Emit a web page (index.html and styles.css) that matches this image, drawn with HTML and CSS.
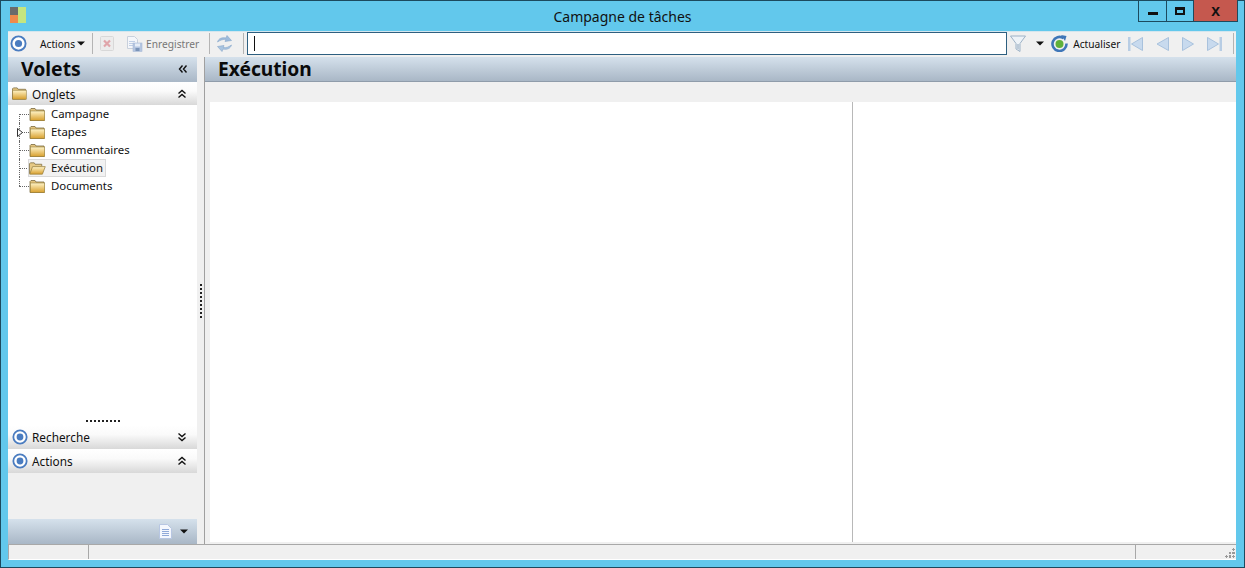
FILE: index.html
```html
<!DOCTYPE html>
<html lang="fr">
<head>
<meta charset="utf-8">
<title>Campagne de tâches</title>
<link rel="stylesheet" href="styles.css">
</head>
<body>
<svg class="defs" width="0" height="0" aria-hidden="true">
  <defs>
    <linearGradient id="fold" x1="0" y1="0" x2="0" y2="1"><stop offset="0" stop-color="#fff4c8"/><stop offset="1" stop-color="#d89f2c"/></linearGradient>
    <linearGradient id="foldTab" x1="0" y1="0" x2="0" y2="1"><stop offset="0" stop-color="#e6c985"/><stop offset="1" stop-color="#c79a45"/></linearGradient>
    <symbol id="ring" viewBox="0 0 18 18">
      <circle cx="9" cy="9" r="7.500" fill="#fff" stroke="#4a7cc0" stroke-width="2"/>
      <circle cx="9" cy="9" r="3.800" fill="#4a7cc0"/>
    </symbol>
    <symbol id="folder" viewBox="0 0 16 13">
      <path d="M.5 3.500V1.500l1-1h4l1 1.500h8v10.500h-14z" fill="url(#foldTab)" stroke="#7a6a40" stroke-width=".8"/>
      <rect x=".8" y="3" width="14.400" height="9.600" fill="url(#fold)" stroke="#97803f" stroke-width=".6"/>
    </symbol>
    <symbol id="folderOpen" viewBox="0 0 18 13">
      <path d="M.5 12V1.500l1-1h4l1 1.500h7v2" fill="#e6c985" stroke="#7a6a40" stroke-width=".8"/>
      <path d="M.8 12.500l3-8h13.400l-3 8z" fill="url(#fold)" stroke="#97803f" stroke-width=".8"/>
    </symbol>
    <symbol id="chevUp" viewBox="0 0 10 10">
      <path d="M1.500 4.500L5 1.500l3.500 3M1.500 8.500L5 5.500l3.500 3" fill="none" stroke="#111" stroke-width="1.400"/>
    </symbol>
    <symbol id="chevDown" viewBox="0 0 10 10">
      <path d="M1.500 1.500L5 4.500l3.500-3M1.500 5.500L5 8.500l3.500-3" fill="none" stroke="#111" stroke-width="1.400"/>
    </symbol>
    <symbol id="chevLeft" viewBox="0 0 10 10">
      <path d="M4.500 1.500L1.500 5l3 3.500M8.500 1.500L5.500 5l3 3.500" fill="none" stroke="#111" stroke-width="1.400"/>
    </symbol>
    <symbol id="caret" viewBox="0 0 8 5"><path d="M0 .5h8L4 4.500z" fill="#111"/></symbol>
  </defs>
</svg>

<div class="window">
  <header class="titlebar">
    <svg class="app-logo" width="17" height="17" viewBox="0 0 17 17" aria-hidden="true">
      <rect width="8" height="8" fill="#6b6b6b"/>
      <rect y="8" width="8" height="8" fill="#f08a4b"/>
      <rect x="8" width="8" height="16" fill="#c5e57e"/>
    </svg>
    <h1 class="title">Campagne de tâches</h1>
    <div class="win-controls">
      <div class="wc wc-min"><span class="glyph-min"></span></div>
      <div class="wc wc-max"><span class="glyph-max"></span></div>
      <div class="wc wc-close">X</div>
    </div>
  </header>

  <div class="client">
    <div class="toolbar">
      <svg class="tb-ring" width="17" height="17"><use href="#ring"/></svg>
      <span class="tb-text tb-actions">Actions</span>
      <svg class="tb-caret" width="8" height="5"><use href="#caret"/></svg>
      <span class="tb-sep"></span>
      <svg class="tb-del" width="14" height="15" viewBox="0 0 14 15" aria-hidden="true">
        <rect x=".5" y=".5" width="13" height="14" rx="1" fill="#ececec" stroke="#d8d8d8"/>
        <path d="M4 4.500l6 6M10 4.500l-6 6" stroke="#e0a5aa" stroke-width="2.200"/>
      </svg>
      <svg class="tb-save" width="17" height="17" viewBox="0 0 17 17" aria-hidden="true">
        <path d="M1.500 1.500h7l3 3v9h-10z" fill="#f4f6fa" stroke="#c8d0dc"/>
        <path d="M3 6.500h6M3 8.500h4M3 10.500h4" stroke="#c0cfe6"/>
        <rect x="7" y="8" width="9" height="8.500" fill="#b4c5e0" stroke="#a9bad6" stroke-width=".6"/>
        <rect x="9" y="8.500" width="5" height="3" fill="#e6edf7"/>
        <rect x="9.500" y="13" width="4" height="3" fill="#7a94b8"/>
      </svg>
      <span class="tb-text tb-disabled">Enregistrer</span>
      <span class="tb-sep tb-sep-b"></span>
      <svg class="tb-sync" width="17" height="17" viewBox="0 0 17 17" aria-hidden="true">
        <path d="M1.500 7C2.500 3.500 6 2 10 3l1-2.500 4.500 5-6.500 1 .8-2C7.500 4 4.500 5 1.500 7z" fill="#9dbbdc" stroke="#86a6ca" stroke-width=".6"/>
        <path d="M15.500 10c-1 3.500-4.500 5-8.500 4l-1 2.500-4.500-5 6.500-1-.8 2c3.300.5 5.300-.5 8.300-2.500z" fill="#a9c4e0" stroke="#86a6ca" stroke-width=".6"/>
      </svg>
      <span class="tb-sep tb-sep-c"></span>
      <div class="search"><span class="caret-line"></span></div>
      <svg class="tb-funnel" width="16" height="18" viewBox="0 0 16 18" aria-hidden="true">
        <path d="M.5 1h15L10 8.500v8l-4-2.500V8.500z" fill="#eef3f8" stroke="#9db2c6"/>
        <path d="M6.500 9h3v6l-3-1.500z" fill="#bccad8"/>
      </svg>
      <svg class="tb-caret tb-caret-f" width="8" height="5"><use href="#caret"/></svg>
      <svg class="tb-refresh" width="17" height="17" viewBox="0 0 17 17" aria-hidden="true">
        <path d="M12.500 3.200A7 7 0 1 0 15.500 8.500" fill="none" stroke="#3f76b8" stroke-width="2.600"/>
        <path d="M10 0l5.500 1-1.500 5z" fill="#3f76b8"/>
        <circle cx="8.500" cy="9" r="4" fill="#5fb03a"/>
      </svg>
      <span class="tb-text tb-refresh-label">Actualiser</span>
      <div class="nav">
        <svg width="15" height="14" viewBox="0 0 15 14" aria-hidden="true"><rect x="0" y="0" width="2.500" height="14" fill="#b8cde4"/><path d="M14.500 .5v13L3.500 7z" fill="#c8daee" stroke="#a9c2dd"/></svg>
        <svg width="13" height="14" viewBox="0 0 13 14" aria-hidden="true"><path d="M12.500 .5v13L1 7z" fill="#c8daee" stroke="#a9c2dd"/></svg>
        <svg width="12" height="14" viewBox="0 0 12 14" aria-hidden="true"><path d="M.5 .5v13L11.500 7z" fill="#c8daee" stroke="#a9c2dd"/></svg>
        <svg width="15" height="14" viewBox="0 0 15 14" aria-hidden="true"><rect x="12.500" y="0" width="2.500" height="14" fill="#b8cde4"/><path d="M.5 .5v13L11.500 7z" fill="#c8daee" stroke="#a9c2dd"/></svg>
      </div>
      <span class="tb-sep tb-sep-end"></span>
    </div>

    <div class="body">
      <aside class="sidebar">
        <div class="panel-head">
          <span class="panel-title">Volets</span>
          <svg width="10" height="10"><use href="#chevLeft"/></svg>
        </div>
        <div class="group-head group-first">
          <svg class="group-folder" width="15" height="13"><use href="#folder"/></svg>
          <span class="group-label">Onglets</span>
          <svg class="chev" width="10" height="10"><use href="#chevUp"/></svg>
        </div>
        <ul class="tree">
          <li class="node"><span class="node-item"><svg class="node-icon" width="16" height="13"><use href="#folder"/></svg><span class="node-label">Campagne</span></span></li>
          <li class="node">
            <svg class="expander" width="6" height="9" viewBox="0 0 6 9" aria-hidden="true"><path d="M.5 .5v8l5-4z" fill="#fff" stroke="#333"/></svg>
            <span class="node-item"><svg class="node-icon" width="16" height="13"><use href="#folder"/></svg><span class="node-label">Etapes</span></span>
          </li>
          <li class="node"><span class="node-item"><svg class="node-icon" width="16" height="13"><use href="#folder"/></svg><span class="node-label">Commentaires</span></span></li>
          <li class="node"><span class="node-item node-sel"><svg class="node-icon" width="17" height="13"><use href="#folderOpen"/></svg><span class="node-label">Exécution</span></span></li>
          <li class="node node-last"><span class="node-item"><svg class="node-icon" width="16" height="13"><use href="#folder"/></svg><span class="node-label">Documents</span></span></li>
        </ul>
        <div class="h-grip"></div>
        <div class="group-head">
          <svg class="group-ring" width="16" height="16"><use href="#ring"/></svg>
          <span class="group-label">Recherche</span>
          <svg class="chev" width="10" height="10"><use href="#chevDown"/></svg>
        </div>
        <div class="group-head">
          <svg class="group-ring" width="16" height="16"><use href="#ring"/></svg>
          <span class="group-label">Actions</span>
          <svg class="chev" width="10" height="10"><use href="#chevUp"/></svg>
        </div>
        <div class="side-spacer"></div>
        <div class="side-foot">
          <svg width="13" height="15" viewBox="0 0 13 15" aria-hidden="true">
            <path d="M.5 .5h8l4 4v10H.5z" fill="#f4f7fd" stroke="#b7c6e2"/>
            <path d="M3 5.500h7M3 7.500h7M3 9.500h7M3 11.500h7" stroke="#8fa9d8"/>
          </svg>
          <svg class="foot-caret" width="8" height="5"><use href="#caret"/></svg>
        </div>
      </aside>

      <div class="v-split"><span class="v-grip"></span></div>

      <main class="main">
        <div class="main-head">Exécution</div>
        <div class="main-gap"></div>
        <div class="panes">
          <div class="pane pane-left"></div>
          <div class="pane pane-right"></div>
        </div>
      </main>
    </div>

    <footer class="statusbar">
      <div class="st st-a"></div>
      <div class="st st-b"></div>
      <div class="st st-c"><span class="resize"></span></div>
    </footer>
  </div>
</div>
</body>
</html>
```
FILE: styles.css
```css
* { box-sizing: border-box; }
html, body { margin: 0; padding: 0; height: 100%; overflow: hidden; }
body { font-family: "Noto Sans", "Open Sans", sans-serif; font-size: 12px; color: #111; background: #62c8ec; }
.defs { position: absolute; }

.window {
  width: 1245px; height: 568px;
  background: #62c8ec;
  border: 1px solid #1c4a5e;
  display: flex; flex-direction: column;
}

.titlebar { height: 30px; position: relative; display: flex; align-items: center; justify-content: center; flex: none; }
.app-logo { position: absolute; left: 9px; top: 6px; }
.title { margin: 0; font-size: 14px; font-weight: 400; color: #111; }
.win-controls { position: absolute; right: 6px; top: -1px; height: 22px; display: flex; border: 1px solid #1c4a5e; border-top: 0; }
.wc { display: flex; align-items: center; justify-content: center; height: 100%; }
.wc-min { width: 28px; border-right: 1px solid #1c4a5e; }
.wc-max { width: 26px; }
.wc-close { width: 44px; background: #c5584e; border-left: 1px solid #1c4a5e; font-weight: 700; font-size: 13px; color: #111; }
.glyph-min { width: 10px; height: 3px; background: #111; margin-top: 6px; }
.glyph-max { width: 10px; height: 8px; border: 2px solid #111; border-top-width: 3px; }

.client { flex: 1; display: flex; flex-direction: column; margin: 0 8px 7px 7px; min-height: 0; background: #f0f0f0; }

.toolbar { height: 26px; flex: none; display: flex; align-items: center; background: #f0f0f0; border-top: 1px solid #d4e6ee; padding: 0 0 2px 2px; }
.tb-text { font-size: 10.2px; white-space: nowrap; }
.tb-actions { margin-left: 13px; }
.tb-caret { margin-left: 2px; }
.tb-sep { width: 1px; height: 21px; background: #b4b4b4; margin-left: 7px; }
.tb-del { margin-left: 7px; }
.tb-save { margin-left: 12px; }
.tb-disabled { color: #777; margin-left: 3px; }
.tb-sep-b { margin-left: 10px; }
.tb-sync { margin-left: 6px; }
.tb-sep-c { margin-left: 10px; }
.search { width: 760px; height: 23px; margin-left: 3px; background: #fff; border: 1px solid #2d5f80; display: flex; align-items: center; padding-left: 6px; }
.caret-line { width: 1px; height: 15px; background: #111; }
.tb-funnel { margin-left: 3px; }
.tb-caret-f { margin-left: 10px; }
.tb-refresh { margin-left: 7px; }
.tb-refresh-label { margin-left: 5px; }
.nav { display: flex; align-items: center; gap: 13px; margin-left: 8px; }
.tb-sep-end { margin-left: 11px; }

.body { flex: 1; display: flex; min-height: 0; }

.sidebar { width: 189px; flex: none; display: flex; flex-direction: column; background: #f0f0f0; }
.panel-head { height: 25px; flex: none; display: flex; align-items: center; justify-content: space-between; padding: 0 9px 2px 13px; background: linear-gradient(#d5e1ec, #a9b7c6); }
.panel-title { font-size: 19.4px; font-weight: 700; color: #0a0a0a; }

.group-head { height: 24px; flex: none; display: flex; align-items: center; background: linear-gradient(#fff 0%, #fafafa 40%, #d8d8d8 100%); padding-left: 4px; }
.group-first { height: 23px; }
.group-label { margin-left: 4px; flex: 1; font-size: 11.8px; }
.group-folder + .group-label { margin-left: 5px; }
.chev { margin-right: 10px; }

.tree { list-style: none; margin: 0; padding: 0 0 0 11px; background: #fff; flex: 1; min-height: 0; }
.node { height: 18px; position: relative; display: flex; align-items: center; padding-left: 9px; }
.node::before { content: ""; position: absolute; left: 0; top: 0; bottom: 0; border-left: 1px dotted #666; }
.node::after { content: ""; position: absolute; left: 0; top: 9px; width: 10px; border-top: 1px dotted #666; }
.node:first-child::before { top: 9px; }
.node-last::before { bottom: 9px; }
.expander { position: absolute; left: -2px; top: 5px; z-index: 1; }
.node-item { display: flex; align-items: center; height: 18px; padding: 0 4px 0 1px; position: relative; z-index: 1; }
.node-sel { background: #f2f2f2; border: 1px solid #d9d9d9; padding: 0 2px 0 0; }
.node-icon { flex: none; width: 17px; }
.node-label { margin-left: 5px; line-height: 16px; font-size: 11.4px; }

.h-grip { height: 6px; flex: none; background: #fff; position: relative; }
.h-grip::after { content: ""; position: absolute; left: 78px; top: 1px; width: 34px; height: 2px; background: repeating-linear-gradient(90deg, #222 0 2px, transparent 2px 4px); }

.side-spacer { height: 46px; flex: none; }
.side-foot { height: 25px; flex: none; display: flex; align-items: center; justify-content: flex-end; gap: 8px; padding-right: 9px; background: linear-gradient(#d5e1ec, #a9b7c6); }

.v-split { width: 8px; flex: none; display: flex; align-items: center; background: #f0f0f0; border-right: 1px solid #a0a0a0; }
.v-grip { display: block; width: 2px; height: 34px; margin-left: 3px; background: repeating-linear-gradient(#222 0 2px, transparent 2px 4px); }

.main { flex: 1; display: flex; flex-direction: column; min-width: 0; }
.main-head { height: 25px; flex: none; padding-left: 13px; font-size: 19.2px; font-weight: 700; line-height: 24px; color: #0a0a0a; background: linear-gradient(#d5e1ec, #a9b7c6); border-bottom: 1px solid #8f9caa; }
.main-gap { height: 20px; flex: none; }
.panes { flex: 1; display: flex; margin-left: 5px; background: #fff; min-height: 0; margin-bottom: 2px; }
.pane { height: 100%; }
.pane-left { width: 643px; border-right: 1px solid #b8b8b8; }
.pane-right { flex: 1; }

.statusbar { height: 16px; flex: none; display: flex; background: #f0f0f0; border-top: 1px solid #a8a8a8; border-left: 1px solid #a8a8a8; border-bottom: 1px solid #fff; }
.st { height: 100%; }
.st-a { width: 80px; border-right: 1px solid #a8a8a8; }
.st-b { width: 1047px; border-right: 1px solid #a8a8a8; }
.st-c { flex: 1; position: relative; }
.resize { position: absolute; right: 1px; bottom: 1px; width: 10px; height: 10px; background:
  radial-gradient(circle at 8.500px 1.500px, #999 1.200px, transparent 1.300px),
  radial-gradient(circle at 8.500px 5px, #999 1.200px, transparent 1.300px),
  radial-gradient(circle at 8.500px 8.500px, #999 1.200px, transparent 1.300px),
  radial-gradient(circle at 5px 5px, #999 1.200px, transparent 1.300px),
  radial-gradient(circle at 5px 8.500px, #999 1.200px, transparent 1.300px),
  radial-gradient(circle at 1.500px 8.500px, #999 1.200px, transparent 1.300px); }
```
